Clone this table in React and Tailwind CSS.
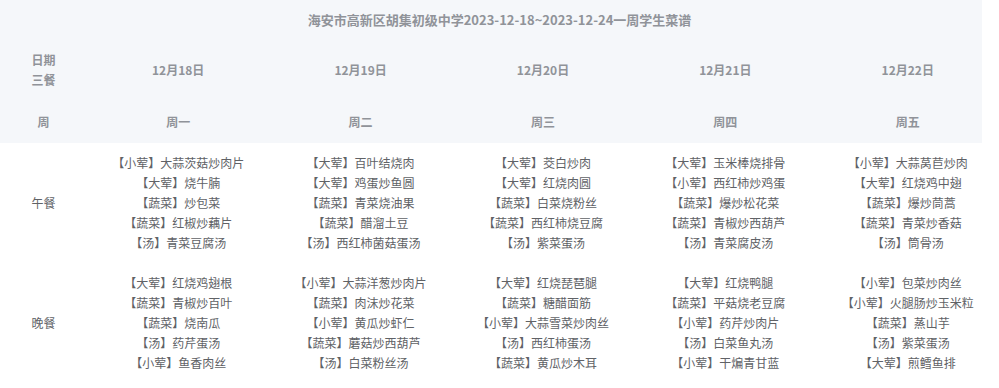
const days = [
  { date: '12月18日', week: '周一' },
  { date: '12月19日', week: '周二' },
  { date: '12月20日', week: '周三' },
  { date: '12月21日', week: '周四' },
  { date: '12月22日', week: '周五' },
];

const meals = [
  {
    name: '午餐',
    dishes: [
      ['【小荤】大蒜茨菇炒肉片', '【大荤】烧牛腩', '【蔬菜】炒包菜', '【蔬菜】红椒炒藕片', '【汤】青菜豆腐汤'],
      ['【大荤】百叶结烧肉', '【大荤】鸡蛋炒鱼圆', '【蔬菜】青菜烧油果', '【蔬菜】醋溜土豆', '【汤】西红柿菌菇蛋汤'],
      ['【大荤】茭白炒肉', '【大荤】红烧肉圆', '【蔬菜】白菜烧粉丝', '【蔬菜】西红柿烧豆腐', '【汤】紫菜蛋汤'],
      ['【大荤】玉米棒烧排骨', '【小荤】西红柿炒鸡蛋', '【蔬菜】爆炒松花菜', '【蔬菜】青椒炒西葫芦', '【汤】青菜腐皮汤'],
      ['【小荤】大蒜莴苣炒肉', '【大荤】红烧鸡中翅', '【蔬菜】爆炒茼蒿', '【蔬菜】青菜炒香菇', '【汤】筒骨汤'],
    ],
  },
  {
    name: '晚餐',
    dishes: [
      ['【大荤】红烧鸡翅根', '【蔬菜】青椒炒百叶', '【蔬菜】烧南瓜', '【汤】药芹蛋汤', '【小荤】鱼香肉丝'],
      ['【小荤】大蒜洋葱炒肉片', '【蔬菜】肉沫炒花菜', '【小荤】黄瓜炒虾仁', '【蔬菜】蘑菇炒西葫芦', '【汤】白菜粉丝汤'],
      ['【大荤】红烧琵琶腿', '【蔬菜】糖醋面筋', '【小荤】大蒜雪菜炒肉丝', '【汤】西红柿蛋汤', '【蔬菜】黄瓜炒木耳'],
      ['【大荤】红烧鸭腿', '【蔬菜】平菇烧老豆腐', '【小荤】药芹炒肉片', '【汤】白菜鱼丸汤', '【小荤】干煸青甘蓝'],
      ['【小荤】包菜炒肉丝', '【小荤】火腿肠炒玉米粒', '【蔬菜】蒸山芋', '【汤】紫菜蛋汤', '【大荤】煎鳕鱼排'],
    ],
  },
];

const cols = 'grid grid-cols-[87px_repeat(5,182.4px)]';

export default function App() {
  return (
    <div
      className="w-[999px] h-[388px] overflow-hidden bg-white"
      style={{ fontFamily: '"Noto Sans CJK SC", "Noto Sans", sans-serif' }}
    >
      <div className="bg-[linear-gradient(to_right,#f5f7fa_982px,#ffffff_982px)] text-[#909399] font-bold">
        <div className="h-[40px] flex items-center justify-center text-[13px]">
          海安市高新区胡集初级中学2023-12-18~2023-12-24一周学生菜谱
        </div>
        <div className={`${cols} h-[60px] items-center text-[12px] leading-[20px]`}>
          <div className="text-center">
            <div>日期</div>
            <div>三餐</div>
          </div>
          {days.map((d) => (
            <div key={d.date} className="text-center">{d.date}</div>
          ))}
        </div>
        <div className={`${cols} h-[43px] items-center text-[12px]`}>
          <div className="text-center">周</div>
          {days.map((d) => (
            <div key={d.week} className="text-center">{d.week}</div>
          ))}
        </div>
      </div>
      {meals.map((m) => (
        <div key={m.name} className={`${cols} py-[10px] items-center text-[12px] leading-[20px] text-[#606266]`}>
          <div className="text-center">{m.name}</div>
          {m.dishes.map((list, i) => (
            <div key={i} className="text-center whitespace-nowrap">
              {list.map((dish) => (
                <div key={dish}>{dish}</div>
              ))}
            </div>
          ))}
        </div>
      ))}
    </div>
  );
}
